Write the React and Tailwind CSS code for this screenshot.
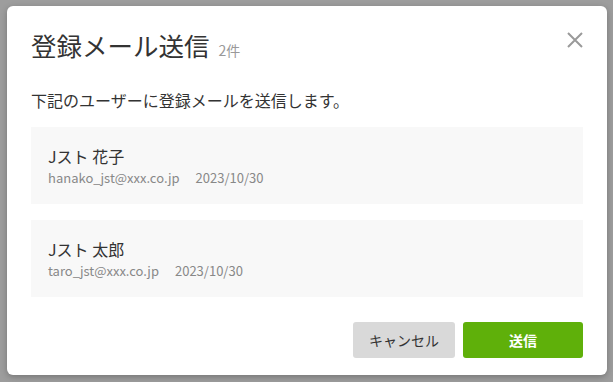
import React from 'react';

const users = [
  { name: 'Jスト 花子', email: 'hanako_jst@xxx.co.jp', date: '2023/10/30' },
  { name: 'Jスト 太郎', email: 'taro_jst@xxx.co.jp', date: '2023/10/30' }
];

export default function App() {
  return (
    <div
      className="w-[613px] h-[382px] bg-[#9d9d9d] overflow-hidden pt-[6px] pl-[7px]"
      style={{ fontFamily: '"Noto Sans CJK JP", "Noto Sans", sans-serif' }}
    >
      <div className="w-[600px] h-[369px] bg-white rounded-[6px] shadow-[0_2px_6px_rgba(0,0,0,0.25)] pl-[24px] pr-[24px] pt-[22px] pb-[17px] flex flex-col">
        <div className="flex items-start justify-between">
          <div className="flex items-baseline gap-[9px]">
            <h2 className="text-[25.5px] leading-[34px] text-[#333]">登録メール送信</h2>
            <span className="text-[14px] text-[#999]">2件</span>
          </div>
          <button className="mt-[2px] mr-[-2px] text-[#9a9a9a]">
            <svg width="20" height="20" viewBox="0 0 20 20" fill="none" stroke="currentColor" strokeWidth="2">
              <path d="M3 3L17 17M17 3L3 17" />
            </svg>
          </button>
        </div>

        <p className="mt-[27px] text-[16px] leading-[22px] text-[#333]">下記のユーザーに登録メールを送信します。</p>

        <div className="mt-[16px] flex flex-col gap-[16px]">
          {users.map((u) => (
            <div key={u.email} className="h-[77px] bg-[#f8f8f8] px-[17px] pt-[18px]">
              <div className="text-[16px] leading-[22px] text-[#333]">{u.name}</div>
              <div className="mt-[2px] flex gap-[16px] text-[13px] leading-[18px] text-[#888]">
                <span>{u.email}</span>
                <span>{u.date}</span>
              </div>
            </div>
          ))}
        </div>

        <div className="mt-auto flex justify-end gap-[8px]">
          <button className="w-[102px] h-[36px] rounded-[3px] bg-[#d9d9d9] text-[14px] text-[#333]">キャンセル</button>
          <button className="w-[120px] h-[36px] rounded-[3px] bg-[#5fb00a] text-[14px] font-bold text-white">送信</button>
        </div>
      </div>
    </div>
  );
}
